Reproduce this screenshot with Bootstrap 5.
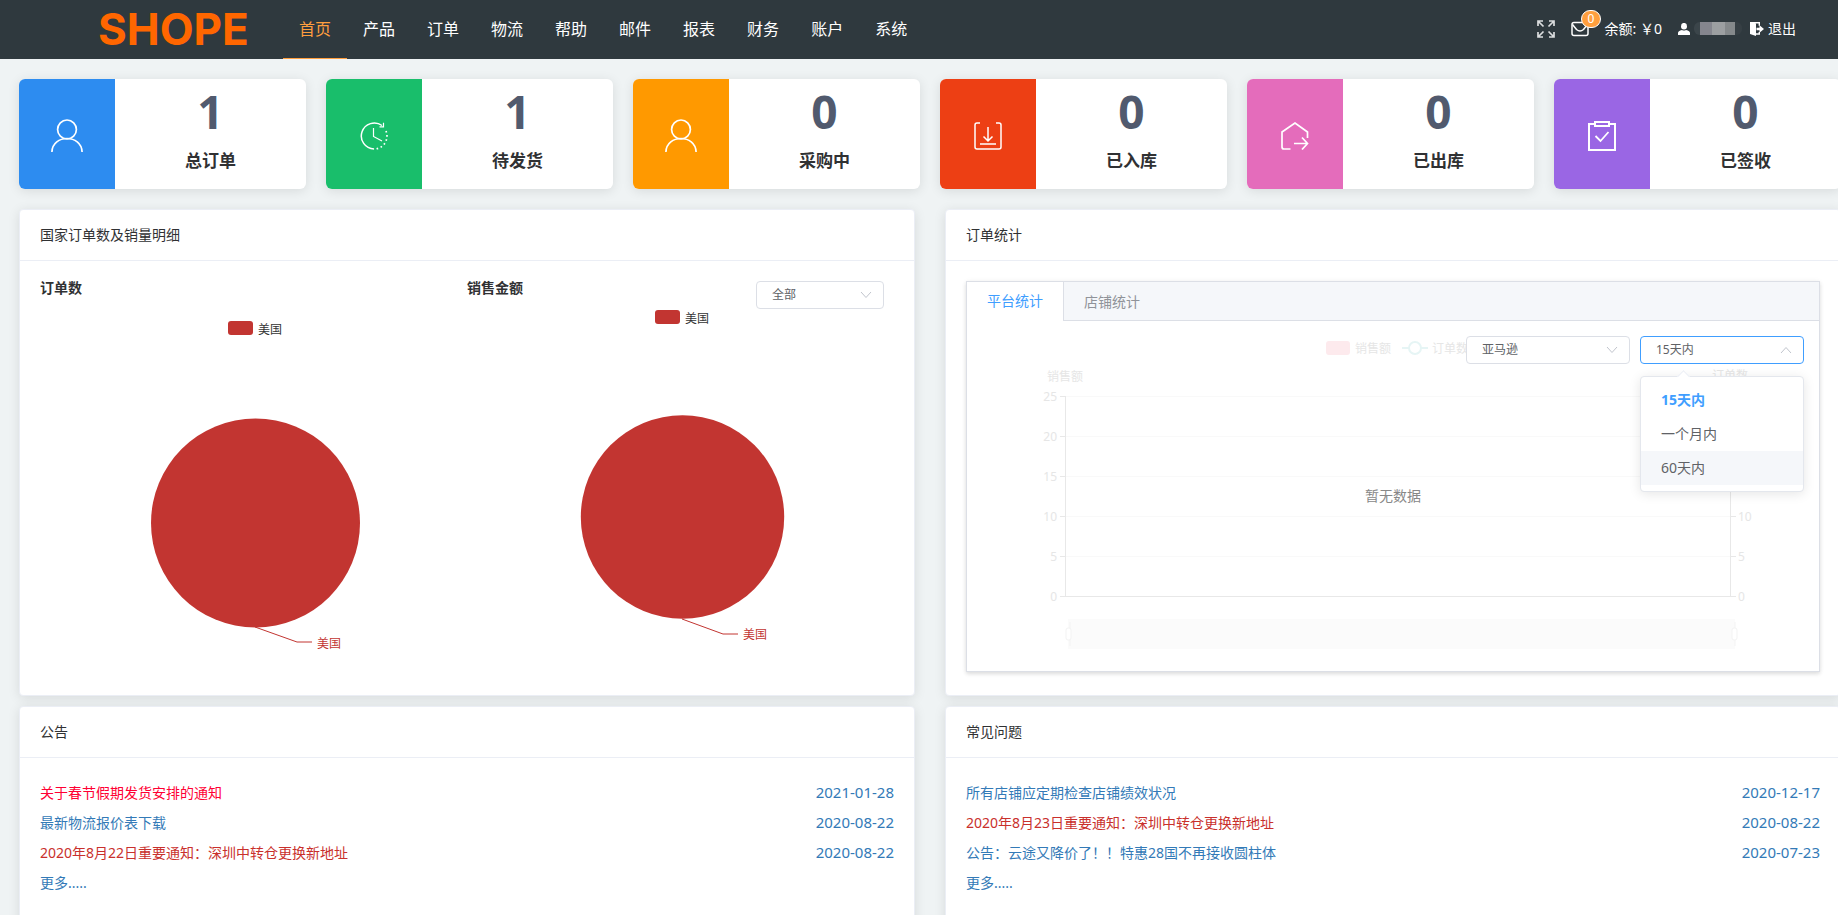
<!DOCTYPE html>
<html lang="zh-CN">
<head>
<meta charset="utf-8">
<meta name="viewport" content="width=device-width, initial-scale=1">
<title>SHOPE</title>
<link href="https://cdn.jsdelivr.net/npm/bootstrap@5.3.0/dist/css/bootstrap.min.css" rel="stylesheet">
<style>
  :root { --line: #ebeef5; --edge: #dcdfe6; --accent: #409eff; --orange: #ff9f3e; --pie: #c23531; }
  body { background: #eff3f4; color: #303133; font: 14px/20px "Noto Sans", "Noto Sans CJK SC", sans-serif; overflow-x: hidden; }
  a { text-decoration: none; }
  .topbar { background: #2f393e; height: 59px; padding: 0 42px 0 98px; }
  .brand { color: #f60; font: 700 44px/59px Inter, sans-serif; width: 185px; }
  .brand:hover { color: #f60; }
  .topbar .nav-link { color: #fff; font-size: 16px; line-height: 58px; padding: 0 16px; border-bottom: 1px solid transparent; border-radius: 0; }
  .topbar .nav-link.active { color: var(--orange); border-color: var(--orange); }
  .tools { padding-bottom: 2px; }
  .tools a, .tools button { color: #fff; }
  .tools button { background: none; border: 0; padding: 0; line-height: 0; }
  .count { background: var(--orange); font-size: 12px; font-weight: 400; line-height: 16px; padding: 0 6px; border: 1px solid #fff; border-radius: 9px; top: -11px; left: 10px; }
  .user-mask { width: 48px; height: 13px; border-radius: 6px; background: linear-gradient(90deg, #3b454a 12%, #85868e 12% 38%, #9c9fa1 38% 64%, #85898b 64% 86%, #363f44 86%); }
  .board { margin: 20px -3px 0 19px; }
  .stats { display: grid; grid-template-columns: repeat(6, 1fr); gap: 20px; }
  .panels { display: grid; grid-template-columns: repeat(2, 1fr); gap: 10px 30px; margin-top: 20px; }
  .stat { height: 110px; border-radius: 6px; overflow: hidden; background: #fff; }
  .raised { box-shadow: 0 2px 12px rgba(0, 0, 0, .1); }
  .stat-icon { width: 96px; padding-top: 4px; }
  .stat-num { font: 700 46px/56px "Noto Sans", sans-serif; color: #515a6e; padding-top: 4px; }
  .stat-name { font-size: 17px; font-weight: 700; line-height: 24px; padding-top: 10px; }
  .panel { background: #fff; border: 1px solid var(--line); border-radius: 4px; }
  .panel-head { font-size: 14px; font-weight: 400; line-height: 14px; padding: 18px 20px; margin: 0; border-bottom: 1px solid var(--line); }
  .panel-body { padding: 20px; }
  .charts-panel { height: 487px; }
  .notice-panel { height: 240px; }
  .chart-name { font-size: 14px; font-weight: 700; line-height: 14px; margin: 0; }
  svg text { font-size: 12px; }
  .pick { width: 164px; height: 28px; padding: 0 15px; font-size: 12px; line-height: 26px; color: #606266; border: 1px solid var(--edge); border-radius: 4px;
    background: #fff url("data:image/svg+xml,%3Csvg xmlns='http://www.w3.org/2000/svg' width='12' height='8' fill='none' stroke='%23c0c4cc'%3E%3Cpath d='M1 1l5 5.500 5-5.500'/%3E%3C/svg%3E") no-repeat right 11px center; appearance: none; }
  .pick-short { width: 128px; margin-right: 10px; }
  .pick-open { border-color: var(--accent); background-image: url("data:image/svg+xml,%3Csvg xmlns='http://www.w3.org/2000/svg' width='12' height='8' fill='none' stroke='%23c0c4cc'%3E%3Cpath d='M1 7l5-5.500 5 5.500'/%3E%3C/svg%3E"); }
  .tabbox { border: 1px solid var(--edge); box-shadow: 0 2px 4px rgba(0, 0, 0, .12), 0 0 6px rgba(0, 0, 0, .04); }
  .tabbox .nav { background: #f5f7fa; border-bottom: 1px solid var(--edge); }
  .tabbox .nav-link { color: #909399; background: transparent; line-height: 38px; padding: 0 20px; border: 0; border-radius: 0; margin-bottom: -1px; }
  .tabbox .nav-link.active { color: var(--accent); background: #fff; border-right: 1px solid var(--edge); padding-bottom: 1px; }
  .tab-content-area { padding: 15px; }
  .filters { top: 15px; right: 15px; gap: 10px; }
  .options { top: 40px; left: 0; width: 164px; min-width: 0; padding: 6px 0; font-size: 14px; border: 1px solid #e4e7ed; border-radius: 4px; box-shadow: 0 2px 12px rgba(0, 0, 0, .1); }
  .options::before { content: ""; position: absolute; top: -5px; left: 38px; width: 9px; height: 9px; background: #fff; border: 1px solid var(--line); border-right: 0; border-bottom: 0; transform: rotate(45deg); }
  .options .dropdown-item { color: #606266; line-height: 34px; padding: 0 20px; }
  .options .chosen { color: var(--accent); font-weight: 700; background: none; }
  .options .hovered { background: #f5f7fa; }
  .notices li { line-height: 30px; }
  .notices a, .notices time { color: #337ab7; }
  .notices time { font-size: 15px; line-height: 28px; }
  .notices .hot { color: #ff0033; }
  .notices .key { color: #c9302c; }
</style>
</head>
<body>
<header class="topbar d-flex align-items-center">
  <a class="brand flex-shrink-0" href="#">SHOPE</a>
  <nav class="nav flex-nowrap">
    <a class="nav-link active" href="#">首页</a>
    <a class="nav-link" href="#">产品</a>
    <a class="nav-link" href="#">订单</a>
    <a class="nav-link" href="#">物流</a>
    <a class="nav-link" href="#">帮助</a>
    <a class="nav-link" href="#">邮件</a>
    <a class="nav-link" href="#">报表</a>
    <a class="nav-link" href="#">财务</a>
    <a class="nav-link" href="#">账户</a>
    <a class="nav-link" href="#">系统</a>
  </nav>
  <div class="tools d-flex align-items-center ms-auto text-nowrap">
    <button type="button" aria-label="全屏" class="me-3">
      <svg width="18" height="18" viewBox="0 0 18 18" fill="none" stroke="#dcdedf" stroke-width="1.700"><path d="M1 6V1h5M1.500 1.500l5 5M12 1h5v5M16.500 1.500l-5 5M1 12v5h5M1.500 16.500l5-5M17 12v5h-5M16.500 16.500l-5-5"/></svg>
    </button>
    <button type="button" aria-label="消息" class="position-relative me-3">
      <svg width="18" height="16" viewBox="0 0 18 16" fill="none" stroke="#fff" stroke-width="1.500"><rect x="1" y="1.500" width="16" height="13" rx="2"/><path d="M1.500 3.500l4 5q3.500 3 7 0l4-5"/></svg>
      <span class="badge count position-absolute">0</span>
    </button>
    <span class="text-white me-3">余额: ￥0</span>
    <a href="#" class="d-flex align-items-center me-2" aria-label="用户">
      <svg width="12" height="12" viewBox="0 0 12 12" fill="#fff"><ellipse cx="6" cy="3.200" rx="3" ry="3.300"/><path d="M0 12V10q0-2 4-3 2 1 4 0 4 1 4 3v2z"/></svg>
      <span class="user-mask ms-1"></span>
    </a>
    <a href="#" class="d-flex align-items-center gap-1">
      <svg width="14" height="14" viewBox="0 0 14 14"><path d="M0 0h4.500L6 1.500V14L0 12z" fill="#fff"/><path d="M2 .700h7.300v3M9.300 10v2H6" fill="none" stroke="#fff" stroke-width="1.400"/><path d="M6.500 5.700H9.500V3.200L14 7l-4.500 3.800V8.300h-3z" fill="#fff"/></svg>
      退出
    </a>
  </div>
</header>

<main class="board">
  <section class="stats">
    <div class="stat raised d-flex">
      <div class="stat-icon d-flex align-items-center justify-content-center" style="background:#2d8cf0">
        <svg width="32" height="34" viewBox="0 0 32 34" fill="none" stroke="#fff" stroke-width="1.700"><ellipse cx="16" cy="10.500" rx="9.400" ry="9.500"/><path d="M.900 33C1.500 15 30.500 15 31.100 33"/></svg>
      </div>
      <div class="flex-grow-1 text-center"><div class="stat-num">1</div><div class="stat-name">总订单</div></div>
    </div>
    <div class="stat raised d-flex">
      <div class="stat-icon d-flex align-items-center justify-content-center" style="background:#19be6b">
        <svg width="28" height="28" viewBox="0 0 28 28" fill="none" stroke="#fff" stroke-width="1.500"><path d="M14 27A13 13 0 1 1 22 3.500"/><path d="M19.500 4.800h4V.800M13.500 6v8.500l8.500 4.500" stroke-width="1.200"/><path d="M26 9a13 13 0 0 1-12 18" stroke-dasharray="1.600 2.600" stroke-width="1.700"/></svg>
      </div>
      <div class="flex-grow-1 text-center"><div class="stat-num">1</div><div class="stat-name">待发货</div></div>
    </div>
    <div class="stat raised d-flex">
      <div class="stat-icon d-flex align-items-center justify-content-center" style="background:#ff9900">
        <svg width="32" height="34" viewBox="0 0 32 34" fill="none" stroke="#fff" stroke-width="1.700"><ellipse cx="16" cy="10.500" rx="9.400" ry="9.500"/><path d="M.900 33C1.500 15 30.500 15 31.100 33"/></svg>
      </div>
      <div class="flex-grow-1 text-center"><div class="stat-num">0</div><div class="stat-name">采购中</div></div>
    </div>
    <div class="stat raised d-flex">
      <div class="stat-icon d-flex align-items-center justify-content-center" style="background:#ed3f14">
        <svg width="28" height="28" viewBox="0 0 28 28" fill="none" stroke="#fff" stroke-width="1.500"><path d="M6 1H3Q1 1 1 3v22q0 2 2 2h22q2 0 2-2V3q0-2-2-2h-3M6 22h16M14 5v14M9.500 14.500L14 19l4.500-4.500"/></svg>
      </div>
      <div class="flex-grow-1 text-center"><div class="stat-num">0</div><div class="stat-name">已入库</div></div>
    </div>
    <div class="stat raised d-flex">
      <div class="stat-icon d-flex align-items-center justify-content-center" style="background:#e46cbb">
        <svg width="28" height="28" viewBox="0 0 28 28" fill="none" stroke="#fff" stroke-width="1.700"><path d="M9.500 27H3Q1 27 1 25V10L14 1l12.500 9v6M13 21.500h13M21 15.500l5.500 6-5.500 6"/></svg>
      </div>
      <div class="flex-grow-1 text-center"><div class="stat-num">0</div><div class="stat-name">已出库</div></div>
    </div>
    <div class="stat raised d-flex">
      <div class="stat-icon d-flex align-items-center justify-content-center" style="background:#9a66e4">
        <svg width="28" height="30" viewBox="0 0 28 30" fill="none" stroke="#fff" stroke-width="2"><path d="M6.500 3H1v26h26V3h-5.500"/><rect x="7" y="1" width="14" height="4"/><path d="M7.500 15l5 5 8-9" stroke-width="1.800"/></svg>
      </div>
      <div class="flex-grow-1 text-center"><div class="stat-num">0</div><div class="stat-name">已签收</div></div>
    </div>
  </section>

  <div class="panels">
    <section class="panel raised charts-panel">
      <h2 class="panel-head">国家订单数及销量明细</h2>
      <div class="panel-body row g-0">
        <div class="col-6">
          <h3 class="chart-name">订单数</h3>
          <svg class="d-block" width="100%" height="376">
            <rect x="188" y="26" width="25" height="14" rx="3" fill="#c23531"/>
            <text x="218" y="39" fill="#333">美国</text>
            <circle cx="215.500" cy="228" r="104.500" fill="#c23531"/>
            <path d="M215 332l42 15h15" fill="none" stroke="#c23531"/>
            <text x="277" y="353" fill="#c23531">美国</text>
          </svg>
        </div>
        <div class="col-6">
          <div class="d-flex justify-content-between align-items-start">
            <h3 class="chart-name">销售金额</h3>
            <select class="pick pick-short" aria-label="销售金额范围"><option>全部</option></select>
          </div>
          <svg class="d-block" width="100%" height="362">
            <rect x="188" y="1" width="25" height="14" rx="3" fill="#c23531"/>
            <text x="218" y="14" fill="#333">美国</text>
            <circle cx="215.500" cy="208" r="101.700" fill="#c23531"/>
            <path d="M215 310l41 15h15" fill="none" stroke="#c23531"/>
            <text x="276" y="330" fill="#c23531">美国</text>
          </svg>
        </div>
      </div>
    </section>

    <section class="panel raised charts-panel">
      <h2 class="panel-head">订单统计</h2>
      <div class="panel-body">
        <div class="tabbox">
          <div class="nav">
            <button type="button" class="nav-link active">平台统计</button>
            <button type="button" class="nav-link">店铺统计</button>
          </div>
          <div class="tab-content-area position-relative">
            <svg class="d-block" width="100%" height="320">
              <g fill="#e6e6e6">
                <rect x="344" y="5" width="24" height="14" rx="3" fill="#fdeaed"/>
                <text x="373" y="17">销售额</text>
                <path d="M420 12h26" stroke="#e6f5f5" stroke-width="2"/><circle cx="433" cy="12" r="6" fill="#fff" stroke="#e6f5f5" stroke-width="2"/>
                <text x="450" y="17">订单数</text>
                <text x="65" y="45">销售额</text>
                <text x="730" y="44">订单数</text>
              </g>
              <path d="M84 60.500h664M84 100.500h664M84 140.500h664M84 180.500h664M84 220.500h664" stroke="#f9f9f9"/>
              <path d="M83.500 60v200M748.500 60v200M78 260.500h676M78 60.500h5M78 100.500h5M78 140.500h5M78 180.500h5M78 220.500h5M749 60.500h5M749 100.500h5M749 140.500h5M749 180.500h5M749 220.500h5" stroke="#e8e8e8"/>
              <g fill="#e6e6e6" text-anchor="end">
                <text x="75" y="65">25</text><text x="75" y="105">20</text><text x="75" y="145">15</text><text x="75" y="185">10</text><text x="75" y="225">5</text><text x="75" y="265">0</text>
              </g>
              <g fill="#e6e6e6">
                <text x="756" y="185">10</text><text x="756" y="225">5</text><text x="756" y="265">0</text>
              </g>
              <rect x="86" y="283" width="667" height="30" fill="#fbfbfb"/>
              <g fill="#fff" stroke="#f3f3f3"><path d="M88 286v24"/><rect x="84" y="292" width="5" height="12" rx="2"/><path d="M753 286v24"/><rect x="750" y="292" width="5" height="12" rx="2"/></g>
              <text x="50%" y="165" text-anchor="middle" fill="#888" style="font-size:14px">暂无数据</text>
            </svg>
            <div class="filters position-absolute d-flex">
              <select class="pick" aria-label="平台"><option>亚马逊</option></select>
              <div class="position-relative">
                <select class="pick pick-open d-block" aria-label="时间范围"><option>15天内</option></select>
                <div class="dropdown-menu show options">
                  <button type="button" class="dropdown-item chosen">15天内</button>
                  <button type="button" class="dropdown-item">一个月内</button>
                  <button type="button" class="dropdown-item hovered">60天内</button>
                </div>
              </div>
            </div>
          </div>
        </div>
      </div>
    </section>

    <section class="panel raised notice-panel">
      <h2 class="panel-head">公告</h2>
      <ul class="panel-body notices list-unstyled mb-0">
        <li class="d-flex justify-content-between"><a class="hot" href="#">关于春节假期发货安排的通知</a><time>2021-01-28</time></li>
        <li class="d-flex justify-content-between"><a href="#">最新物流报价表下载</a><time>2020-08-22</time></li>
        <li class="d-flex justify-content-between"><a class="key" href="#">2020年8月22日重要通知：深圳中转仓更换新地址</a><time>2020-08-22</time></li>
        <li><a href="#">更多.....</a></li>
      </ul>
    </section>

    <section class="panel raised notice-panel">
      <h2 class="panel-head">常见问题</h2>
      <ul class="panel-body notices list-unstyled mb-0">
        <li class="d-flex justify-content-between"><a href="#">所有店铺应定期检查店铺绩效状况</a><time>2020-12-17</time></li>
        <li class="d-flex justify-content-between"><a class="key" href="#">2020年8月23日重要通知：深圳中转仓更换新地址</a><time>2020-08-22</time></li>
        <li class="d-flex justify-content-between"><a href="#">公告：云途又降价了！！特惠28国不再接收圆柱体</a><time>2020-07-23</time></li>
        <li><a href="#">更多.....</a></li>
      </ul>
    </section>
  </div>
</main>
<script src="https://cdn.jsdelivr.net/npm/bootstrap@5.3.0/dist/js/bootstrap.bundle.min.js"></script>
</body>
</html>
